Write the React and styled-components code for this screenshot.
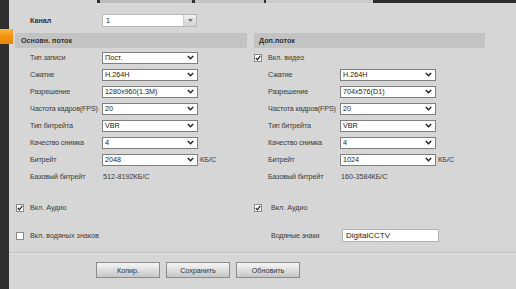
import styled, { createGlobalStyle } from 'styled-components';

const GlobalStyle = createGlobalStyle`
    html, body {
        margin: 0;
        padding: 0;
        background: #d6d6d6;
    }
    body {
        font-family: "Liberation Sans", Arial, sans-serif;
        font-size: 7.2px;
        color: #3c3c3c;
    }
`;

const Page = styled.div`
    display: flex;
    width: 516px;
    height: 289px;
    overflow: hidden;
`;

const Sidebar = styled.div`
    width: 9px;
    flex-shrink: 0;
    background: #2f2f2f;
    display: flex;
    flex-direction: column;
    padding-top: 29px;
    position: relative;
    z-index: 1;
`;

const Marker = styled.div`
    width: 13px;
    height: 15px;
    background: linear-gradient(to bottom, #ffb640, #f19410 45%, #e9860a);
`;

const Main = styled.div`
    flex: 1;
    display: flex;
    flex-direction: column;
    min-width: 0;
`;

const TopStrip = styled.div`
    display: flex;
    height: 3px;
`;

const StripPart = styled.div`
    width: ${(p) => p.$w}px;
    flex: ${(p) => (p.$grow ? 1 : 'none')};
    background: ${(p) => p.$bg};
    border-left: ${(p) => p.$edge || 0}px solid #2f2f2f;
    border-right: ${(p) => p.$edgeR || 0}px solid #2f2f2f;
    box-sizing: border-box;
`;

const ChannelRow = styled.div`
    display: flex;
    align-items: center;
    height: 13px;
    margin-top: 11px;
    padding-left: 21px;
`;

const ChannelLabel = styled.div`
    width: 72px;
    font-weight: bold;
    color: #333;
`;

const ChannelSelect = styled.div`
    width: 95px;
    height: 13px;
    box-sizing: border-box;
    background: #fff;
    border: 1px solid #b8b8b8;
    display: flex;
    color: #222;
`;

const ChannelValue = styled.div`
    flex: 1;
    padding-left: 3px;
    display: flex;
    align-items: center;
`;

const ChannelArrow = styled.div`
    width: 12px;
    background: linear-gradient(to bottom, #f0f0f0, #d2d2d2);
    border-left: 1px solid #d0d0d0;
    display: flex;
    align-items: center;
    justify-content: center;
`;

const Columns = styled.div`
    display: grid;
    grid-template-columns: 232px 231px;
    column-gap: 7px;
    margin-top: 6px;
    padding-left: 6px;
`;

const Column = styled.div`
    display: flex;
    flex-direction: column;
`;

const SectionHeader = styled.div`
    height: 15px;
    background: #c3c3c3;
    font-weight: bold;
    color: #333;
    display: flex;
    align-items: center;
    padding-left: ${(p) => p.$pad}px;
    margin-bottom: 1px;
`;

const Row = styled.div`
    display: grid;
    grid-template-columns: 72px 96px auto;
    align-items: center;
    height: 17px;
    padding-left: ${(p) => p.$pad}px;
    margin-top: ${(p) => p.$top || 0}px;
`;

const Label = styled.div`
    white-space: nowrap;
    letter-spacing: -0.15px;
`;

const Select = styled.div`
    height: 12px;
    box-sizing: border-box;
    background: #fff;
    border: 1px solid #7f7f7f;
    display: flex;
    align-items: center;
    justify-content: space-between;
    padding: 0 3px 0 2px;
    color: #222;
`;

const Unit = styled.div`
    margin-left: 2px;
`;

const Value = styled.div`
    padding-left: 1px;
`;

const CheckRow = styled.div`
    display: flex;
    align-items: center;
    height: 17px;
    gap: ${(p) => p.$gap}px;
    padding-left: ${(p) => p.$pad}px;
    margin-top: ${(p) => p.$top || 0}px;
`;

const Box = styled.div`
    width: 8px;
    height: 8px;
    box-sizing: border-box;
    background: #fff;
    border: 1px solid #8a8a8a;
    display: flex;
    align-items: center;
    justify-content: center;
`;

const FieldRow = styled.div`
    display: grid;
    grid-template-columns: 71px 97px;
    align-items: center;
    height: 17px;
    padding-left: ${(p) => p.$pad}px;
    margin-top: ${(p) => p.$top || 0}px;
`;

const TextInput = styled.div`
    height: 13px;
    box-sizing: border-box;
    background: #fff;
    border: 1px solid #b4b4b4;
    display: flex;
    align-items: center;
    padding-left: 3px;
    font-size: 8px;
    color: #222;
`;

const Footer = styled.div`
    margin-top: 8px;
    border-top: 1px solid #c4c4c4;
    box-shadow: inset 0 1px 0 #e0e0e0;
    display: flex;
    gap: 6px;
    padding: 9px 0 0 87px;
`;

const Button = styled.div`
    width: 64px;
    height: 16px;
    box-sizing: border-box;
    border: 1px solid #8c8c8c;
    background: linear-gradient(to bottom, #f6f6f6, #dedede 50%, #c6c6c6);
    display: flex;
    align-items: center;
    justify-content: center;
    color: #333;
`;

const Chevron = () => (
    <svg width="7" height="5" viewBox="0 0 7 5">
        <polyline points="0.8,1 3.5,3.8 6.2,1" fill="none" stroke="#222" strokeWidth="1.4" />
    </svg>
);

const Check = () => (
    <svg width="6" height="6" viewBox="0 0 6 6">
        <polyline points="0.8,3 2.4,4.8 5.3,0.8" fill="none" stroke="#222" strokeWidth="1.2" />
    </svg>
);

const Drop = ({ value }) => (
    <Select>
        <span>{value}</span>
        <Chevron />
    </Select>
);

const mainRows = [
    ['Тип записи', 'Пост.'],
    ['Сжатие', 'H.264H'],
    ['Разрешение', '1280x960(1.3M)'],
    ['Частота кадров(FPS)', '20'],
    ['Тип битрейта', 'VBR'],
    ['Качество снимка', '4'],
    ['Битрейт', '2048', 'КБ/С'],
];

const extraRows = [
    ['Сжатие', 'H.264H'],
    ['Разрешение', '704x576(D1)'],
    ['Частота кадров(FPS)', '20'],
    ['Тип битрейта', 'VBR'],
    ['Качество снимка', '4'],
    ['Битрейт', '1024', 'КБ/С'],
];

const App = () => {
    return (
        <>
            <GlobalStyle />
            <Page>
                <Sidebar>
                    <Marker />
                </Sidebar>
                <Main>
                    <TopStrip>
                        <StripPart $w={88} $bg="transparent" />
                        <StripPart $w={98} $bg="#bcbcbc" $edge={3} $edgeR={3} />
                        <StripPart $w={69} $bg="#c4c4c4" />
                        <StripPart $w={109} $bg="#cbcbcb" $edge={2} />
                        <StripPart $grow $bg="#2f2f2f" />
                    </TopStrip>
                    <ChannelRow>
                        <ChannelLabel>Канал</ChannelLabel>
                        <ChannelSelect>
                            <ChannelValue>1</ChannelValue>
                            <ChannelArrow>
                                <svg width="5" height="3" viewBox="0 0 5 3">
                                    <polygon points="0,0 5,0 2.5,3" fill="#777" />
                                </svg>
                            </ChannelArrow>
                        </ChannelSelect>
                    </ChannelRow>
                    <Columns>
                        <Column>
                            <SectionHeader $pad={6}>Основн. поток</SectionHeader>
                            {mainRows.map(([label, value, unit]) => (
                                <Row key={label} $pad={15}>
                                    <Label>{label}</Label>
                                    <Drop value={value} />
                                    {unit && <Unit>{unit}</Unit>}
                                </Row>
                            ))}
                            <Row $pad={15}>
                                <Label>Базовый битрейт</Label>
                                <Value>512-8192КБ/С</Value>
                            </Row>
                            <CheckRow $pad={1} $gap={6} $top={14}>
                                <Box>
                                    <Check />
                                </Box>
                                <span>Вкл. Аудио</span>
                            </CheckRow>
                            <CheckRow $pad={1} $gap={6} $top={11}>
                                <Box />
                                <span>Вкл. водяных знаков</span>
                            </CheckRow>
                        </Column>
                        <Column>
                            <SectionHeader $pad={5}>Доп.поток</SectionHeader>
                            <CheckRow $pad={0} $gap={6}>
                                <Box>
                                    <Check />
                                </Box>
                                <span>Вкл. видео</span>
                            </CheckRow>
                            {extraRows.map(([label, value, unit]) => (
                                <Row key={label} $pad={14}>
                                    <Label>{label}</Label>
                                    <Drop value={value} />
                                    {unit && <Unit>{unit}</Unit>}
                                </Row>
                            ))}
                            <Row $pad={14}>
                                <Label>Базовый битрейт</Label>
                                <Value>160-3584КБ/С</Value>
                            </Row>
                            <CheckRow $pad={0} $gap={9} $top={14}>
                                <Box>
                                    <Check />
                                </Box>
                                <span>Вкл. Аудио</span>
                            </CheckRow>
                            <FieldRow $pad={17} $top={11}>
                                <Label>Водяные знаки</Label>
                                <TextInput>DigitalCCTV</TextInput>
                            </FieldRow>
                        </Column>
                    </Columns>
                    <Footer>
                        <Button>Копир.</Button>
                        <Button>Сохранить</Button>
                        <Button>Обновить</Button>
                    </Footer>
                </Main>
            </Page>
        </>
    );
};

export default App;
